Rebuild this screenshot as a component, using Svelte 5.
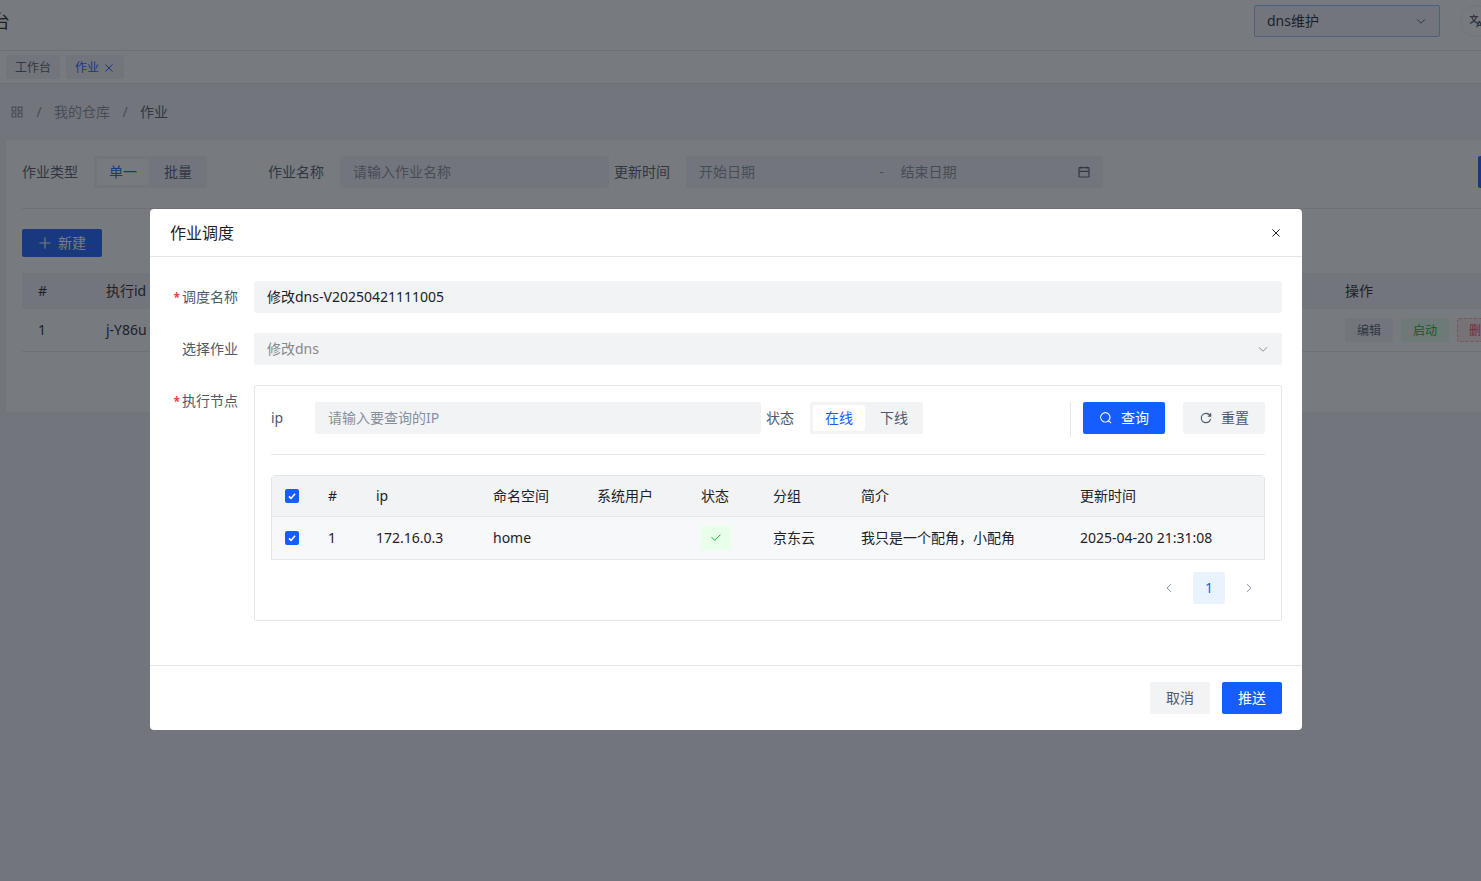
<script>
  let jobKind = $state('single');
  let nodeState = $state('online');
  let scheduleName = $state('修改dns-V20250421111005');
  let allPicked = $state(true);

  const nodes = $state([
    {
      picked: true,
      ip: '172.16.0.3',
      space: 'home',
      user: '',
      group: '京东云',
      intro: '我只是一个配角，小配角',
      updated: '2025-04-20 21:31:08'
    }
  ]);

  const icons = {
    close: 'M9.857 9.858 24 24m0 0 14.142 14.142M24 24 38.142 9.858M24 24 9.857 38.142',
    down: 'M39.6 17.443 24.043 33 8.487 17.443',
    plus: 'M5 24h38M24 5v38',
    search:
      'M33.072 33.071c6.248-6.248 6.248-16.379 0-22.627-6.249-6.249-16.38-6.249-22.628 0-6.248 6.248-6.248 16.379 0 22.627 6.248 6.248 16.38 6.248 22.628 0Zm0 0 8.485 8.485',
    refresh:
      'M38.837 18C36.463 12.136 30.715 8 24 8 15.163 8 8 15.163 8 24s7.163 16 16 16c7.455 0 13.72-5.1 15.496-12M40 8v10H30',
    check: 'M41.678 11.05 19.05 33.678 6.322 20.95',
    calendar:
      'M7 22h34M14 5v8m20-8v8M8 41h32a1 1 0 0 0 1-1V10a1 1 0 0 0-1-1H8a1 1 0 0 0-1 1v30a1 1 0 0 0 1 1Z',
    apps: 'M7 7h13v13H7zM28 7h13v13H28zM7 28h13v13H7zM28 28h13v13H28z',
    left: 'M32 8.4 16.444 23.956 32 39.513',
    right: 'm16 39.513 15.556-15.557L16 8.4',
    language:
      'm42 43-2.385-6M26 43l2.384-6m11.231 0-.795-2-4.18-10h-1.28l-4.181 10-.795 2m11.231 0h-11.23M17 5l1 5M5 11h26M11 11s1.889 7.826 6.611 12.174C22.333 27.522 30 31 30 31M25 11s-1.889 7.826-6.611 12.174C13.667 27.522 6 31 6 31'
  };
</script>

{#snippet icon(name, size = 14)}
  <svg class="icon" width={size} height={size} viewBox="0 0 48 48" aria-hidden="true">
    <path d={icons[name]} />
  </svg>
{/snippet}

{#snippet tick()}
  <svg class="tick" width="8" height="8" viewBox="0 0 10 10" aria-hidden="true">
    <path d="M1.2 5.4 3.8 8 8.8 2.2" />
  </svg>
{/snippet}

<div class="page">
  <header class="topbar">
    <h1 class="brand">台</h1>
    <div class="topbar-tools">
      <div class="select select-site">
        <select aria-label="dns维护">
          <option>dns维护</option>
        </select>
        {@render icon('down', 12)}
      </div>
      <button class="round" type="button">{@render icon('language', 16)}</button>
    </div>
  </header>

  <nav class="tabs">
    <a class="tab" href="#bench">工作台</a>
    <a class="tab current" href="#job">作业 {@render icon('close', 12)}</a>
  </nav>

  <nav class="crumbs">
    {@render icon('apps')}
    <span class="slash">/</span>
    <a href="#store">我的仓库</a>
    <span class="slash">/</span>
    <span class="here">作业</span>
  </nav>

  <main class="panel">
    <form class="filters">
      <div class="field" role="group" aria-labelledby="kind-label">
        <span class="label" id="kind-label">作业类型</span>
        <div class="switch">
          <label><input type="radio" name="kind" value="single" bind:group={jobKind} /><span>单一</span></label>
          <label><input type="radio" name="kind" value="batch" bind:group={jobKind} /><span>批量</span></label>
        </div>
      </div>
      <div class="field">
        <label class="label" for="job-name">作业名称</label>
        <input class="text" id="job-name" type="text" placeholder="请输入作业名称" />
      </div>
      <div class="field range-field">
        <label class="label" for="date-from">更新时间</label>
        <div class="range">
          <input id="date-from" type="text" placeholder="开始日期" />
          <span>-</span>
          <input type="text" placeholder="结束日期" aria-label="结束日期" />
          {@render icon('calendar')}
        </div>
      </div>
      <div></div>
      <button class="btn primary" type="button">{@render icon('search')}查询</button>
    </form>

    <hr />

    <button class="btn primary small" type="button">{@render icon('plus')}新建</button>

    <table class="jobs">
      <colgroup>
        <col class="j-index" />
        <col />
        <col class="j-actions" />
      </colgroup>
      <thead>
        <tr><th>#</th><th>执行id</th><th>操作</th></tr>
      </thead>
      <tbody>
        <tr>
          <td>1</td>
          <td>j-Y86u</td>
          <td>
            <div class="actions">
              <button class="mini" type="button">编辑</button>
              <button class="mini go" type="button">启动</button>
              <button class="mini drop" type="button">删除</button>
            </div>
          </td>
        </tr>
      </tbody>
    </table>
  </main>
</div>

<div class="mask">
  <div class="modal" role="dialog" aria-modal="true" aria-labelledby="modal-title">
    <div class="modal-head">
      <h2 id="modal-title">作业调度</h2>
      <button class="plain" type="button">{@render icon('close', 12)}</button>
    </div>

    <div class="modal-body">
      <div class="row">
        <label class="row-label required" for="schedule">调度名称</label>
        <input class="text dark" id="schedule" type="text" bind:value={scheduleName} />
      </div>
      <div class="row">
        <label class="row-label" for="job">选择作业</label>
        <div class="select">
          <select id="job" disabled>
            <option>修改dns</option>
          </select>
          {@render icon('down', 12)}
        </div>
      </div>
      <div class="row">
        <span class="row-label required">执行节点</span>
        <div class="box">
          <div class="node-filters">
            <div class="field">
              <label class="label" for="ip">ip</label>
              <input class="text" id="ip" type="text" placeholder="请输入要查询的IP" />
            </div>
            <div class="field" role="group" aria-labelledby="state-label">
              <span class="label" id="state-label">状态</span>
              <div class="switch">
                <label><input type="radio" name="state" value="online" bind:group={nodeState} /><span>在线</span></label>
                <label><input type="radio" name="state" value="offline" bind:group={nodeState} /><span>下线</span></label>
              </div>
            </div>
            <div class="node-buttons">
              <button class="btn primary" type="button">{@render icon('search')}查询</button>
              <button class="btn" type="button">{@render icon('refresh')}重置</button>
            </div>
          </div>

          <table class="nodes">
            <colgroup>
              <col class="c-check" />
              <col class="c-index" />
              <col class="c-ip" />
              <col class="c-mid" />
              <col class="c-mid" />
              <col class="c-state" />
              <col class="c-group" />
              <col class="c-intro" />
              <col class="c-time" />
            </colgroup>
            <thead>
              <tr>
                <th class="pick">
                  <label class="check"><input type="checkbox" aria-label="全选" bind:checked={allPicked} />{@render tick()}</label>
                </th>
                <th>#</th>
                <th>ip</th>
                <th>命名空间</th>
                <th>系统用户</th>
                <th>状态</th>
                <th>分组</th>
                <th>简介</th>
                <th>更新时间</th>
              </tr>
            </thead>
            <tbody>
              {#each nodes as node, i}
                <tr>
                  <td class="pick">
                    <label class="check"><input type="checkbox" aria-label={node.ip} bind:checked={node.picked} />{@render tick()}</label>
                  </td>
                  <td>{i + 1}</td>
                  <td>{node.ip}</td>
                  <td>{node.space}</td>
                  <td>{node.user}</td>
                  <td><span class="ok">{@render icon('check', 12)}</span></td>
                  <td>{node.group}</td>
                  <td>{node.intro}</td>
                  <td>{node.updated}</td>
                </tr>
              {/each}
            </tbody>
          </table>

          <div class="pager">
            <button type="button">{@render icon('left', 12)}</button>
            <button class="active" type="button">1</button>
            <button type="button">{@render icon('right', 12)}</button>
          </div>
        </div>
      </div>
    </div>

    <div class="modal-foot">
      <button class="btn" type="button">取消</button>
      <button class="btn primary" type="button">推送</button>
    </div>
  </div>
</div>

<style>
  :global(body) {
    overflow: hidden;
    background: #f2f3f5;
    color: #1d2129;
    font: 14px/22px 'Noto Sans', 'Noto Sans CJK SC', sans-serif;
  }

  :global(*) {
    box-sizing: border-box;
  }

  button,
  input,
  select {
    margin: 0;
    border: 0;
    font: inherit;
    color: inherit;
    background: none;
  }

  .icon {
    display: block;
    flex: none;
    fill: none;
    stroke: currentColor;
    stroke-width: 4;
  }

  .page {
    min-height: 100vh;
    overflow: hidden;
  }

  .topbar {
    display: flex;
    align-items: center;
    justify-content: space-between;
    height: 51px;
    padding-bottom: 8px;
    margin-right: -11px;
    background: #fff;
    border-bottom: 1px solid #e5e6eb;
  }

  .brand {
    margin: 0 0 0 -8px;
    font-size: 18px;
    font-weight: 400;
  }

  .topbar-tools {
    display: flex;
    gap: 20px;
  }

  .round {
    display: grid;
    place-items: center;
    width: 32px;
    height: 32px;
    padding: 0;
    border: 1px solid #f2f3f5;
    border-radius: 50%;
    color: #4e5969;
  }

  .select {
    display: grid;
    flex: 1;
    align-items: center;
    height: 32px;
    background: #f2f3f5;
    border-radius: 2px;
  }

  .select > :global(*) {
    grid-area: 1 / 1;
  }

  .select select {
    appearance: none;
    width: 100%;
    height: 100%;
    padding: 0 13px;
  }

  .select select:disabled {
    color: #86888c;
    opacity: 1;
  }

  .select .icon {
    justify-self: end;
    margin-right: 13px;
    color: #86909c;
    pointer-events: none;
  }

  .select-site {
    flex: none;
    width: 186px;
    border: 1px solid #94bfff;
  }

  .select-site select {
    padding: 0 12px;
  }

  .select-site .icon {
    margin-right: 12px;
    color: #4e5969;
  }

  .tabs {
    display: flex;
    gap: 6px;
    padding: 4px 6px;
    background: #fff;
    border-bottom: 1px solid #e5e6eb;
  }

  .tab {
    display: flex;
    align-items: center;
    gap: 4px;
    height: 24px;
    padding: 2px 9px 0;
    border-radius: 2px;
    background: #f2f3f5;
    color: #4e5969;
    font-size: 12px;
    text-decoration: none;
  }

  .tab.current {
    color: #165dff;
  }

  .crumbs {
    display: flex;
    align-items: center;
    height: 56px;
    padding-left: 10px;
    color: #86909c;
  }

  .crumbs a {
    color: inherit;
    text-decoration: none;
  }

  .slash {
    width: 30px;
    text-align: center;
  }

  .here {
    color: #4e5969;
  }

  .panel {
    margin: 0 -100px 0 6px;
    padding: 16px 16px 60px;
    background: #fff;
    border-radius: 4px;
  }

  .filters {
    display: grid;
    grid-template-columns: 246fr 346fr 489fr 375fr 87px;
  }

  .field {
    display: flex;
    align-items: center;
    gap: 16px;
    min-width: 0;
    height: 32px;
    padding-right: 5px;
    color: #4e5969;
  }

  .range-field {
    padding-right: 0;
  }

  .label {
    min-width: 28px;
    white-space: nowrap;
  }

  .text {
    flex: 1;
    min-width: 0;
    height: 32px;
    padding: 0 13px 2px;
    border-radius: 2px;
    background: #f2f3f5;
  }

  .dark {
    color: #1d2129;
  }

  ::placeholder {
    color: #86909c;
    opacity: 1;
  }

  .range {
    display: flex;
    flex: 1;
    align-items: center;
    min-width: 0;
    height: 32px;
    padding: 0 12px;
    border-radius: 2px;
    background: #f2f3f5;
  }

  .range input {
    flex: 1;
    min-width: 0;
    padding: 0 0 0 1px;
  }

  .range span {
    width: 36px;
    text-align: center;
    color: #86909c;
  }

  .range .icon {
    margin-left: 12px;
  }

  .switch {
    display: flex;
    height: 32px;
    padding: 3px;
    border-radius: 2px;
    background: #f2f3f5;
  }

  .switch label {
    display: grid;
  }

  .switch label > * {
    grid-area: 1 / 1;
  }

  .switch input {
    appearance: none;
  }

  .switch span {
    padding: 0 12px;
    margin-right: 3px;
    border-radius: 2px;
    line-height: 26px;
  }

  .switch label:last-child span {
    margin-right: 0;
  }

  .switch input:checked + span {
    background: #fff;
    color: #165dff;
  }

  hr {
    height: 1px;
    margin: 20px 0;
    border: 0;
    background: #e5e6eb;
  }

  .btn {
    display: inline-flex;
    align-items: center;
    justify-content: center;
    gap: 8px;
    height: 32px;
    padding: 0 16px;
    border-radius: 2px;
    background: #f2f3f5;
    color: #4e5969;
    white-space: nowrap;
  }

  .btn.primary {
    background: #165dff;
    color: #fff;
  }

  .btn.small {
    gap: 6px;
    height: 28px;
  }

  table {
    width: 100%;
    table-layout: fixed;
    border-spacing: 0;
  }

  th,
  td {
    padding: 0 16px;
    text-align: left;
    font-weight: 400;
    white-space: nowrap;
  }

  .jobs {
    margin-top: 16px;
  }

  .j-index {
    width: 68px;
  }

  .j-actions {
    width: 236px;
  }

  .jobs th {
    height: 36px;
    background: #f2f3f5;
  }

  .jobs td {
    height: 43px;
    border-bottom: 1px solid #e5e6eb;
  }

  .actions {
    display: flex;
    gap: 8px;
  }

  .mini {
    height: 24px;
    padding: 2px 12px 0;
    border-radius: 2px;
    background: #f2f3f5;
    color: #4e5969;
    font-size: 12px;
    line-height: 22px;
  }

  .mini.go {
    background: #e8ffea;
    color: #00b42a;
  }

  .mini.drop {
    padding: 1px 11px 0;
    border: 1px dashed #fbaca3;
    background: #ffece8;
    color: #f53f3f;
  }

  .mask {
    position: fixed;
    inset: 0;
    padding: 209px 179px 40px 150px;
    background: rgba(29, 33, 41, 0.6);
  }

  .modal {
    background: #fff;
    border-radius: 4px;
  }

  .modal-head {
    display: flex;
    align-items: center;
    justify-content: space-between;
    height: 48px;
    padding: 0 20px;
    border-bottom: 1px solid #e5e6eb;
  }

  .modal-head h2 {
    margin: 0;
    font-size: 16px;
    font-weight: 400;
  }

  .plain {
    padding: 0;
  }

  .modal-body {
    display: flex;
    flex-direction: column;
    gap: 20px;
    padding: 24px 20px 44px;
  }

  .row {
    display: flex;
    align-items: flex-start;
  }

  .row-label {
    width: 84px;
    padding-right: 16px;
    color: #4e5969;
    line-height: 32px;
    text-align: right;
    white-space: nowrap;
  }

  .required::before {
    content: '*';
    margin-right: 2px;
    color: #f53f3f;
    font-size: 12px;
    font-weight: 700;
    line-height: 12px;
  }

  .box {
    flex: 1;
    min-width: 0;
    padding: 16px;
    border: 1px solid #e5e6eb;
    border-radius: 2px;
  }

  .node-filters {
    display: grid;
    grid-template-columns: 495fr 304fr auto;
    height: 53px;
    margin-bottom: 20px;
    border-bottom: 1px solid #e5e6eb;
  }

  .node-buttons {
    display: flex;
    gap: 18px;
    height: 35px;
    padding-left: 12px;
    border-left: 1px solid #e5e6eb;
  }

  .nodes {
    border: 1px solid #e5e6eb;
    border-radius: 4px 4px 0 0;
  }

  .c-check {
    width: 40px;
  }
  .c-index {
    width: 48px;
  }
  .c-ip {
    width: 117px;
  }
  .c-mid {
    width: 104px;
  }
  .c-state {
    width: 72px;
  }
  .c-group {
    width: 88px;
  }
  .c-intro {
    width: 219px;
  }
  .c-time {
    width: 200px;
  }

  .nodes th {
    height: 41px;
    background: #f2f3f5;
    border-bottom: 1px solid #e5e6eb;
  }

  .nodes td {
    height: 42px;
    background: #f7f8fa;
  }

  .nodes .pick {
    padding: 0 13px;
  }

  .check {
    display: grid;
    width: 14px;
    height: 14px;
    place-items: center;
  }

  .check > :global(*) {
    grid-area: 1 / 1;
  }

  .check input {
    appearance: none;
    width: 14px;
    height: 14px;
    border: 2px solid #e5e6eb;
    border-radius: 2px;
    background: #fff;
  }

  .check input:checked {
    border-color: #165dff;
    background: #165dff;
  }

  .tick {
    fill: none;
    stroke: #fff;
    stroke-width: 2;
    pointer-events: none;
  }

  .ok {
    display: grid;
    place-items: center;
    width: 30px;
    height: 24px;
    border-radius: 2px;
    background: #e8ffea;
    color: #00b42a;
  }

  .pager {
    display: flex;
    justify-content: flex-end;
    gap: 8px;
    margin-top: 12px;
  }

  .pager button {
    display: grid;
    place-items: center;
    width: 32px;
    height: 32px;
    padding: 0;
    border-radius: 2px;
    color: #86909c;
  }

  .pager .active {
    background: #e8f3ff;
    color: #165dff;
  }

  .modal-foot {
    display: flex;
    justify-content: flex-end;
    gap: 12px;
    padding: 16px 20px;
    border-top: 1px solid #e5e6eb;
  }
</style>
